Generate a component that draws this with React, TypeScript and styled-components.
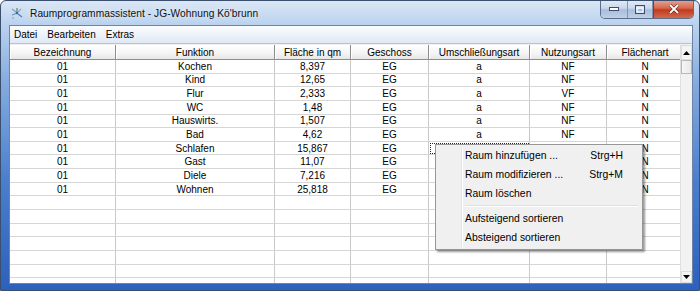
import React, { FC } from 'react';
import styled, { createGlobalStyle } from 'styled-components';

const GlobalStyle = createGlobalStyle`
html, body {
    margin: 0;
    padding: 0;
    background: #ffffff;
    font-family: "Liberation Sans", Arial, sans-serif;
}
`;

const Window = styled.div`
position: relative;
width: 700px;
height: 291px;
box-sizing: border-box;
display: flex;
flex-direction: column;
padding: 0 6px 6px 8px;
border: 1px solid #3a4f6e;
border-radius: 6px 6px 0 0;
background: linear-gradient(to bottom, #dbe7f5 0px, #bcd3ef 22px, #86acdf 80px, #4a7ecd 180px, #2c60bb 291px);
overflow: hidden;
`;

const TitleBar = styled.div`
height: 24px;
display: flex;
align-items: center;
justify-content: space-between;
flex-shrink: 0;
`;

const TitleLeft = styled.div`
display: flex;
align-items: center;
gap: 6px;
padding-left: 1px;
`;

const TitleText = styled.span`
font-size: 10.2px;
color: #101010;
letter-spacing: 0.05px;
text-shadow: 0 0 6px rgba(255, 255, 255, 0.9);
`;

const Controls = styled.div`
display: flex;
align-self: flex-start;
margin-top: -1px;
margin-right: -1px;
border: 1px solid #5a6e8c;
border-top: none;
border-radius: 0 0 5px 5px;
overflow: hidden;
`;

const CtrlButton = styled.div<{ $w: number; $close?: boolean }>`
width: ${p => p.$w}px;
height: 18px;
display: flex;
align-items: center;
justify-content: center;
border-left: ${p => (p.$close ? '1px solid #7b3a33' : 'none')};
border-right: ${p => (p.$close ? 'none' : '1px solid #8194b3')};
background: ${p => p.$close
        ? 'linear-gradient(to bottom, #e8a593 0%, #d5694f 45%, #c13a1f 55%, #d26a4c 100%)'
        : 'linear-gradient(to bottom, #e3ebf6 0%, #cad8ec 45%, #a9bedb 55%, #bfd0e8 100%)'};
`;

const Client = styled.div`
flex: 1;
display: flex;
flex-direction: column;
border: 1px solid #6d84a6;
background: #f0f0f0;
min-height: 0;
`;

const MenuBar = styled.div`
height: 17px;
display: flex;
align-items: center;
padding-left: 1px;
background: linear-gradient(to bottom, #fbfcfe 0%, #eef3f9 50%, #dfe8f3 100%);
border-bottom: 1px solid #b6c3d4;
`;

const MenuItem = styled.span`
font-size: 10px;
color: #000;
padding: 0 6px 0 3px;
margin-right: 1px;
`;

const GridArea = styled.div`
flex: 1;
display: flex;
margin-top: 1px;
min-height: 0;
background: #ffffff;
`;

const Table = styled.div`
flex: 1;
display: flex;
flex-direction: column;
overflow: hidden;
`;

const COLS = '106px 159px 76px 78px 101px 77px 77px';

const Row = styled.div<{ $header?: boolean }>`
display: grid;
grid-template-columns: ${COLS};
height: ${p => (p.$header ? '15px' : '13.65px')};
flex-shrink: 0;
`;

const HeaderCell = styled.div`
display: flex;
align-items: center;
justify-content: center;
font-size: 10px;
color: #000;
background: linear-gradient(to bottom, #ffffff 0%, #f4f4f4 60%, #e6e6e6 100%);
border-right: 1px solid #8d8d8d;
border-bottom: 1px solid #8d8d8d;
box-shadow: inset 1px 1px 0 #ffffff;
box-sizing: border-box;
`;

const Cell = styled.div<{ $focus?: boolean }>`
display: flex;
align-items: center;
justify-content: center;
font-size: 10px;
color: #000;
border-right: 1px solid #c9c9c9;
border-bottom: 1px solid #d6d6d6;
box-sizing: border-box;
outline: ${p => (p.$focus ? '1px dotted #222' : 'none')};
outline-offset: -2px;
`;

const ScrollBar = styled.div`
width: 11px;
display: flex;
flex-direction: column;
background: #f2f2f2;
border-left: 1px solid #e0e0e0;
`;

const ScrollButton = styled.div<{ $h: number }>`
height: ${p => p.$h}px;
display: flex;
align-items: center;
justify-content: center;
background: #f4f4f4;
border: 1px solid #dcdcdc;
box-sizing: border-box;
`;

const Thumb = styled.div`
height: 14px;
background: linear-gradient(to right, #f7f7f7, #e8e8e8);
border: 1px solid #b8b8b8;
box-sizing: border-box;
`;

const Track = styled.div`
flex: 1;
`;

const ContextMenu = styled.div`
position: absolute;
left: 434px;
top: 143px;
width: 208px;
box-sizing: border-box;
padding: 1px 2px 2px 2px;
background: #f0f0f0;
border: 1px solid #979797;
box-shadow: 2px 2px 2px rgba(0, 0, 0, 0.4);
display: flex;
flex-direction: column;
&::before {
    content: '';
    position: absolute;
    top: 2px;
    bottom: 2px;
    left: 25px;
    width: 0;
    border-left: 1px solid #e2e3e3;
    border-right: 1px solid #ffffff;
}
`;

const MenuEntry = styled.div`
height: 19px;
display: flex;
align-items: center;
justify-content: space-between;
padding: 0 17px 0 27px;
font-size: 10.4px;
color: #000;
`;

const Shortcut = styled.span`
font-size: 10.4px;
`;

const Separator = styled.div`
height: 0;
margin: 2px 2px 2px 27px;
border-top: 1px solid #e0e0e0;
border-bottom: 1px solid #ffffff;
`;

const AppIcon: FC = () => (
    <svg width="14" height="14" viewBox="0 0 14 14">
        <path d="M2 3 L6 6" stroke="#7fa0c8" strokeWidth="1.2" />
        <path d="M7 2 L7 6" stroke="#5a8d5a" strokeWidth="1.2" />
        <path d="M11 3 L8 6" stroke="#9aa8b8" strokeWidth="1.2" />
        <path d="M2 9 L6 7.5" stroke="#6d8fbf" strokeWidth="1.2" />
        <path d="M8 8 L12 11" stroke="#4d7fb8" strokeWidth="1.2" />
        <circle cx="7" cy="7" r="1.3" fill="#3c6aa8" />
        <circle cx="3" cy="12" r="0.9" fill="#8fb0d8" />
    </svg>
);

const rows = [
    ['01', 'Kochen', '8,397', 'EG', 'a', 'NF', 'N'],
    ['01', 'Kind', '12,65', 'EG', 'a', 'NF', 'N'],
    ['01', 'Flur', '2,333', 'EG', 'a', 'VF', 'N'],
    ['01', 'WC', '1,48', 'EG', 'a', 'NF', 'N'],
    ['01', 'Hauswirts.', '1,507', 'EG', 'a', 'NF', 'N'],
    ['01', 'Bad', '4,62', 'EG', 'a', 'NF', 'N'],
    ['01', 'Schlafen', '15,867', 'EG', '', '', 'N'],
    ['01', 'Gast', '11,07', 'EG', '', '', 'N'],
    ['01', 'Diele', '7,216', 'EG', '', '', 'N'],
    ['01', 'Wohnen', '25,818', 'EG', '', '', 'N'],
];

const headers = ['Bezeichnung', 'Funktion', 'Fläche in qm', 'Geschoss', 'Umschließungsart', 'Nutzungsart', 'Flächenart'];

const allRows = [...rows, ...Array.from({ length: 8 }, () => ['', '', '', '', '', '', ''])];

const App: FC = () => {
    return (
        <>
            <GlobalStyle />
            <Window>
                <TitleBar>
                    <TitleLeft>
                        <AppIcon />
                        <TitleText>Raumprogrammassistent - JG-Wohnung Kö'brunn</TitleText>
                    </TitleLeft>
                    <Controls>
                        <CtrlButton $w={26}>
                            <svg width="10" height="4"><rect x="0.5" y="0.5" width="9" height="3" fill="#fff" stroke="#3b4d6a" strokeWidth="1" /></svg>
                        </CtrlButton>
                        <CtrlButton $w={24}>
                            <svg width="10" height="9"><rect x="0.5" y="0.5" width="9" height="8" fill="none" stroke="#3b4d6a" strokeWidth="1" /><rect x="2" y="3" width="6" height="4" fill="none" stroke="#fff" strokeWidth="1.2" /></svg>
                        </CtrlButton>
                        <CtrlButton $w={39} $close>
                            <svg width="12" height="10" viewBox="0 0 12 10"><path d="M2 1 L10 9 M10 1 L2 9" stroke="#5a1a10" strokeWidth="3" /><path d="M2 1 L10 9 M10 1 L2 9" stroke="#fff" strokeWidth="1.8" /></svg>
                        </CtrlButton>
                    </Controls>
                </TitleBar>
                <Client>
                    <MenuBar>
                        <MenuItem>Datei</MenuItem>
                        <MenuItem>Bearbeiten</MenuItem>
                        <MenuItem>Extras</MenuItem>
                    </MenuBar>
                    <GridArea>
                        <Table>
                            <Row $header>
                                {headers.map(h => <HeaderCell key={h}>{h}</HeaderCell>)}
                            </Row>
                            {allRows.map((r, i) => (
                                <Row key={i}>
                                    {r.map((c, j) => <Cell key={j} $focus={i === 6 && j === 4}>{c}</Cell>)}
                                </Row>
                            ))}
                        </Table>
                        <ScrollBar>
                            <ScrollButton $h={15}>
                                <svg width="7" height="4"><path d="M0 4 L3.5 0 L7 4 Z" fill="#000" /></svg>
                            </ScrollButton>
                            <Thumb />
                            <Track />
                            <ScrollButton $h={12}>
                                <svg width="7" height="4"><path d="M0 0 L3.5 4 L7 0 Z" fill="#000" /></svg>
                            </ScrollButton>
                        </ScrollBar>
                    </GridArea>
                </Client>
                <ContextMenu>
                    <MenuEntry>Raum hinzufügen ...<Shortcut>Strg+H</Shortcut></MenuEntry>
                    <MenuEntry>Raum modifizieren ...<Shortcut>Strg+M</Shortcut></MenuEntry>
                    <MenuEntry>Raum löschen</MenuEntry>
                    <Separator />
                    <MenuEntry>Aufsteigend sortieren</MenuEntry>
                    <MenuEntry>Absteigend sortieren</MenuEntry>
                </ContextMenu>
            </Window>
        </>
    );
};

export default App;
